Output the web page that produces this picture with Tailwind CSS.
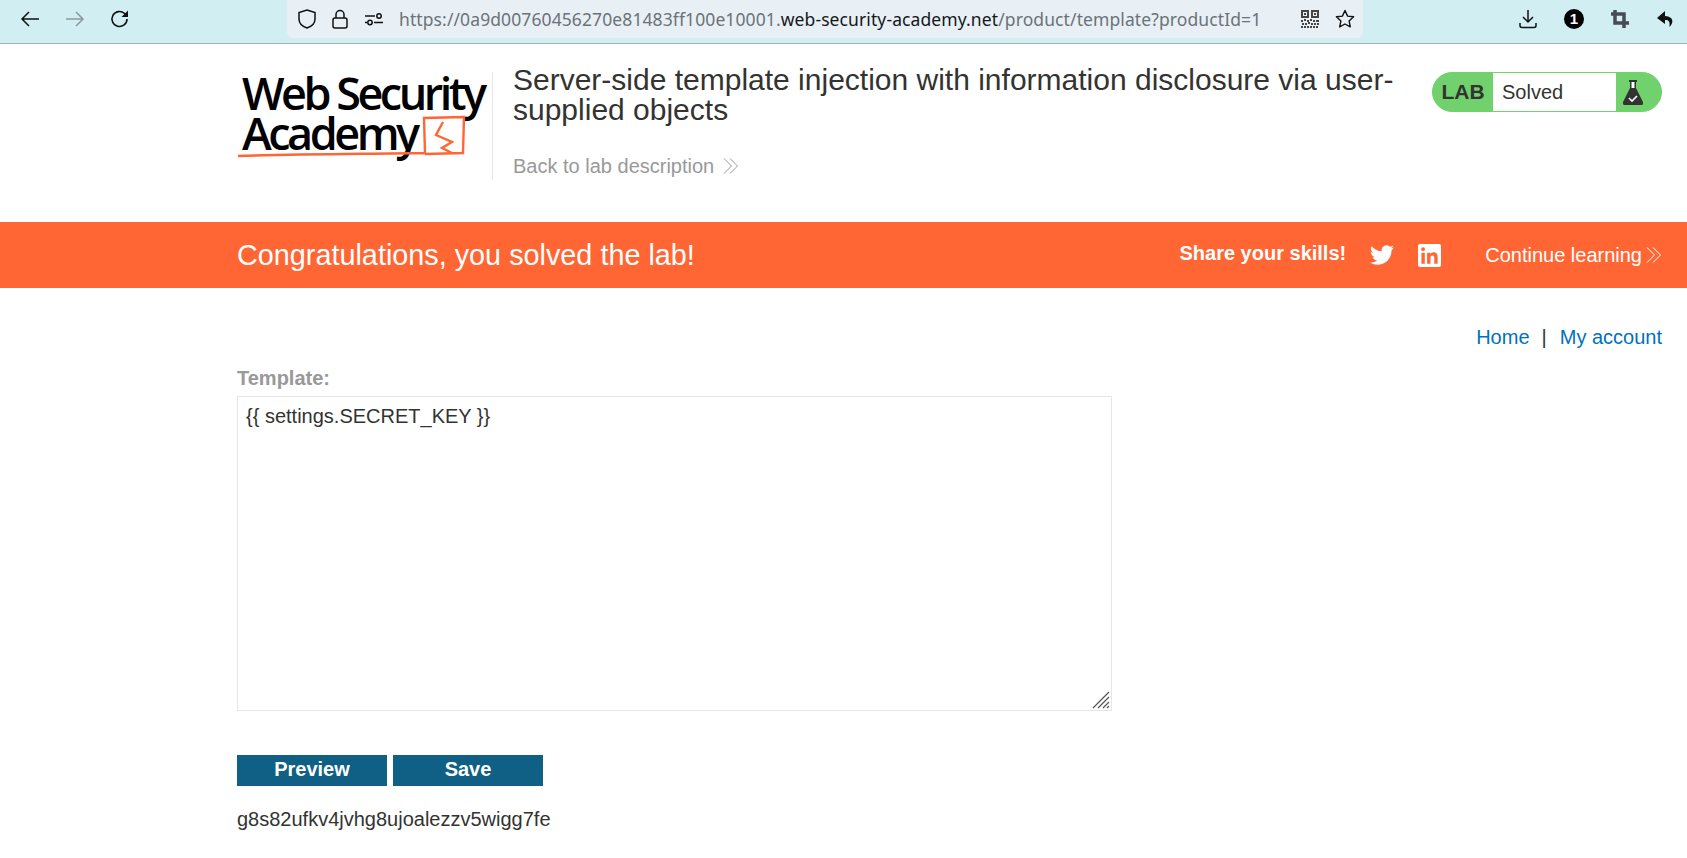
<!DOCTYPE html>
<html lang="en">
<head>
    <meta charset="UTF-8">
    <title>Server-side template injection with information disclosure via user-supplied objects</title>
    <script src="https://cdn.jsdelivr.net/npm/@tailwindcss/browser@4"></script>
</head>
<body class="bg-white font-['Liberation_Sans',Arial,sans-serif] text-[#333332] overflow-hidden">
    <!-- Browser toolbar -->
    <div class="h-[44px] bg-[#d1eef2] border-b border-[#9fb5b8] flex items-start">
        <div class="w-[287px] h-[38px] flex items-center pl-[20px] gap-[25px] shrink-0">
            <svg class="w-5 h-5" viewBox="0 0 20 20" fill="none" stroke="#111" stroke-width="1.5"><path d="M19 10H2M9 3l-7 7 7 7"/></svg>
            <svg class="w-5 h-5" viewBox="0 0 20 20" fill="none" stroke="#8a9a9c" stroke-width="1.5"><path d="M1 10h17M11 3l7 7-7 7"/></svg>
            <svg class="w-5 h-5" viewBox="0 0 20 20" fill="none" stroke="#111" stroke-width="1.6"><path d="M17 10a7.5 7.5 0 1 1-2.4-5.5L17 7"/><path d="M18 1.5V8h-6.5z" fill="#111" stroke="none"/></svg>
        </div>
        <div class="w-[1076px] h-[38px] bg-[#e8f0f6] rounded-b-[6px] flex items-center pl-[10px] shrink-0">
            <svg class="w-[20px] h-[22px]" viewBox="0 0 20 22" fill="none" stroke="#111" stroke-width="1.5"><path d="M10 2l8 2.5V11c0 4.500-3.500 7.500-8 9-4.500-1.500-8-4.500-8-9V4.500z"/></svg>
            <svg class="w-[18px] h-[22px] ml-[14px]" viewBox="0 0 18 22" fill="none" stroke="#111" stroke-width="1.5"><rect x="2" y="10" width="14" height="10" rx="2"/><path d="M5 10V6.500a4 4 0 0 1 8 0V10"/></svg>
            <svg class="w-[20px] h-[14px] ml-[15px]" viewBox="0 0 20 14" fill="none" stroke="#111" stroke-width="1.500"><path d="M1 4h10M1 10.500h2"/><path d="M10 10.500h9"/><circle cx="15" cy="4" r="2.200"/><circle cx="6" cy="10.500" r="2.200"/></svg>
            <div class="ml-[15px] text-[17.5px] text-[#6b7378] whitespace-nowrap font-['Noto_Sans',sans-serif] tracking-[0.1px]">https://0a9d00760456270e81483ff100e10001.<span class="text-[#15181a]">web-security-academy.net</span>/product/template?productId=1</div>
            <div class="ml-auto flex items-center pr-[8px] gap-[16px]">
                <svg class="w-[18px] h-[18px]" viewBox="0 0 18 18" fill="#444"><path fill-rule="evenodd" d="M0 0h8v8H0zM2 2v4h4V2zM10 0h8v8h-8zM12 2v4h4V2zM3 3h2v2H3zM13 3h2v2h-2zM0 10h2v2H0zM3 9h2v2H3zM6 10h2v2H6zM9 9h2v2H9zM12 10h2v2h-2zM15 10h3v2h-3zM1 13h2v2H1zM4 13h2v2H4zM7 12h2v2H7zM10 13h2v2h-2zM13 13h2v2h-2zM16 13h2v2h-2zM0 16h2v2H0zM3 16h2v2H3zM6 16h2v2H6zM9 16h2v2H9zM12 16h2v2h-2zM15 16h2v2h-2z"/></svg>
                <svg class="w-[20px] h-[20px]" viewBox="0 0 20 20" fill="none" stroke="#111" stroke-width="1.400"><path d="M10 1.500l2.600 5.600 6 .7-4.500 4.100 1.200 6L10 15l-5.300 2.900 1.200-6L1.400 7.800l6-.7z" stroke-linejoin="round"/></svg>
            </div>
        </div>
        <div class="flex-1 h-[38px] flex items-center justify-end pr-[11px] gap-[26px]">
            <svg class="w-[20px] h-[20px]" viewBox="0 0 20 20" fill="none" stroke="#111" stroke-width="1.500"><path d="M10 1v12M5 8l5 5 5-5M2 14v2.500a2 2 0 0 0 2 2h12a2 2 0 0 0 2-2V14"/></svg>
            <div class="w-[20px] h-[20px] rounded-full bg-black text-white text-[15px] font-bold flex items-center justify-center">1</div>
            <svg class="w-[20px] h-[20px]" viewBox="0 0 20 20" fill="none" stroke="#4a4a55" stroke-width="3.500"><path d="M5 1v13h14M1 5h13v14"/></svg>
            <svg class="w-[20px] h-[20px]" viewBox="0 0 20 20" fill="#111"><path d="M9 2L1 9l8 6v-4c4 0 5 1.500 4.500 7 4-4 5-10-4.500-11z"/></svg>
        </div>
    </div>

    <!-- Lab header -->
    <div class="h-[178px] pl-[237px] pr-[25px] pt-[28px] flex items-start">
        <div class="w-[256px] h-[108px] shrink-0 border-r border-[#e6e6e6] relative text-black font-['Open_Sans',sans-serif] font-semibold">
            <div class="mt-[1px] text-[45px] tracking-[-3.500px] leading-[40px] pl-[5px] whitespace-nowrap">Web Security</div>
            <div class="text-[45px] tracking-[-3.500px] leading-[40px] pl-[5px] whitespace-nowrap">Academy</div>
            <svg class="absolute left-0 top-0 w-[235px] h-[100px]" viewBox="0 0 235 100" fill="none" stroke="#ff6633" stroke-width="2.400">
                <path d="M1 84c60-2 120-2 187-3l-1-35 40-1-1 36-38 1"/>
                <path d="M206 50l-7 13 16 7-10 6 10 5"/>
            </svg>
        </div>
        <div class="w-[820px] pl-[20px] shrink-0 -mt-[7px]">
            <h2 class="text-[30px] leading-[30px] w-[900px]">Server-side template injection with information disclosure via user-<br>supplied objects</h2>
            <div class="mt-[26px] text-[20px] text-[#999999] flex items-center gap-[9px]">Back to lab description
                <svg class="w-[16px] h-[16px]" viewBox="0 0 16 16" fill="none" stroke="#999" stroke-width="1"><path d="M1 .5L8.500 8 1 15.500M7 .5L14.500 8 7 15.500"/></svg>
            </div>
        </div>
        <div class="ml-auto w-[230px] h-[40px] rounded-[20px] bg-[#70d16d] border border-[#70d16d] flex items-stretch shrink-0 overflow-hidden">
            <div class="w-[60px] flex items-center justify-center text-[21px] font-bold text-[#333332]">LAB</div>
            <div class="w-[123px] bg-white flex items-center pl-[9px] text-[20px] text-[#333332]">Solved</div>
            <div class="flex-1 flex items-center pl-[7px]">
                <svg class="w-[20px] h-[25px]" viewBox="0 0 20 25"><path d="M6 0h8v2h-1v6l7 14a2 2 0 0 1-2 3H2a2 2 0 0 1-2-3L7 8V2H6z" fill="#333332"/><path d="M8.500 2h3v6h-3z" fill="#fff"/><path d="M6 18l3 3 5-5" fill="none" stroke="#fff" stroke-width="1.600"/></svg>
            </div>
        </div>
    </div>

    <!-- Solved banner -->
    <div class="h-[66px] bg-[#ff6633] pl-[237px] pr-[25px] flex items-center text-white">
        <div class="text-[28.800px] mt-[1px]">Congratulations, you solved the lab!</div>
        <div class="ml-auto flex items-center">
            <div class="text-[20px] font-bold -mt-[5px]">Share your skills!</div>
            <svg class="w-[24px] h-[24px] ml-[24px]" viewBox="0 0 24 24" fill="#fff"><path d="M23.950 4.570a10 10 0 0 1-2.820.770 4.960 4.960 0 0 0 2.160-2.720 9.900 9.900 0 0 1-3.120 1.180 4.920 4.920 0 0 0-8.380 4.480C7.690 8.090 4.070 6.120 1.640 3.160a4.820 4.820 0 0 0-.660 2.470c0 1.710.870 3.210 2.190 4.100a4.900 4.900 0 0 1-2.230-.610v.060a4.920 4.920 0 0 0 3.950 4.830 5 5 0 0 1-2.210.080 4.940 4.940 0 0 0 4.600 3.420A9.870 9.870 0 0 1 0 19.540a14 14 0 0 0 7.560 2.210c9.050 0 14-7.500 14-13.980 0-.210 0-.420-.020-.630a9.940 9.940 0 0 0 2.410-2.550z"/></svg>
            <svg class="w-[23px] h-[23px] ml-[24px]" viewBox="0 0 24 24" fill="#fff"><path d="M22 0H2a2 2 0 0 0-2 2v20a2 2 0 0 0 2 2h20a2 2 0 0 0 2-2V2a2 2 0 0 0-2-2zM7.100 20.500H3.600V9h3.500zM5.300 7.400a2 2 0 1 1 0-4.100 2 2 0 0 1 0 4.100zm15.200 13.100H17v-5.600c0-1.300 0-3-1.900-3s-2.100 1.400-2.100 2.900v5.700H9.500V9h3.400v1.600c.500-.900 1.600-1.900 3.400-1.900 3.600 0 4.200 2.400 4.200 5.500z"/></svg>
            <div class="text-[20px] ml-[44px]">Continue learning</div>
            <svg class="w-[16px] h-[16px] ml-[4px]" viewBox="0 0 16 16" fill="none" stroke="#fff" stroke-width="1"><path d="M1 .5L8.500 8 1 15.500M7 .5L14.500 8 7 15.500"/></svg>
        </div>
    </div>

    <!-- Page content -->
    <div class="pl-[237px] pr-[25px]">
        <div class="flex justify-end items-center pt-[37px] text-[20px] leading-[24px] text-[#0071bc]">
            <a href="#">Home</a>
            <span class="ml-[12px] mr-[13px] text-[#333332]">|</span>
            <a href="#">My account</a>
        </div>
        <div class="mt-[18px] text-[20px] leading-[22px] font-bold text-[#999999]">Template:</div>
        <div class="mt-[7px] w-[875px] h-[315px] border border-[#e6e6e6] relative pl-[8px] pt-[8px] text-[20px] leading-[22px] text-[#333332]">
            {{ settings.SECRET_KEY }}
            <svg class="absolute right-[1px] bottom-[1px] w-[18px] h-[18px]" viewBox="0 0 18 18" stroke="#555" stroke-width="1.200"><path d="M1 17L17 1M6 17L17 6M11 17l6-6M15 17l2-2"/></svg>
        </div>
        <div class="mt-[44px] flex gap-[6px]">
            <div class="w-[150px] h-[31px] pb-[3px] bg-[#0f6084] text-white text-[20px] font-bold flex items-center justify-center">Preview</div>
            <div class="w-[150px] h-[31px] pb-[3px] bg-[#0f6084] text-white text-[20px] font-bold flex items-center justify-center">Save</div>
        </div>
        <p class="mt-[21px] text-[20px] leading-[24px] text-[#333332]">g8s82ufkv4jvhg8ujoalezzv5wigg7fe</p>
    </div>
</body>
</html>
